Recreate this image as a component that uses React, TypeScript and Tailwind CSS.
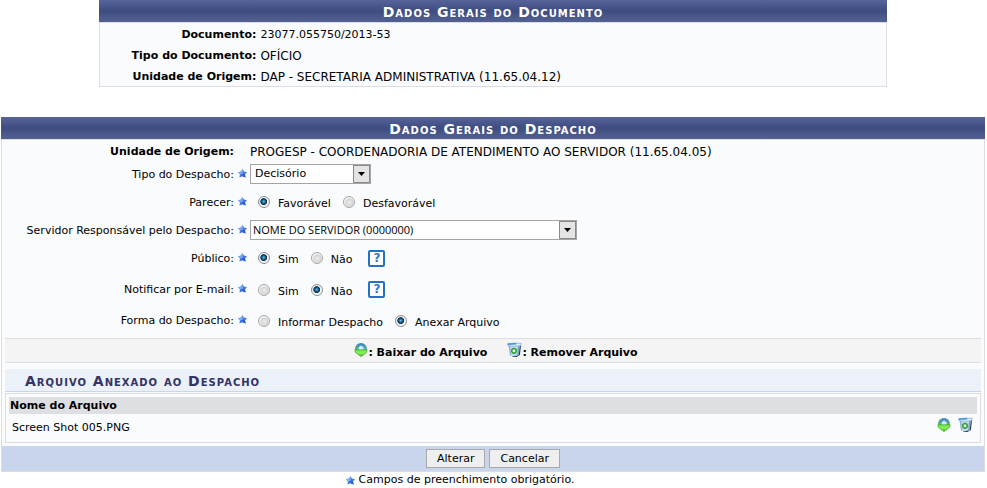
import { useState, type ReactNode } from "react";

const FILES = [{ id: 1, name: "Screen Shot 005.PNG" }];

function Star() {
  return (
    <svg viewBox="0 0 9 9" className="h-[9px] w-[9px] shrink-0" aria-hidden="true">
      <path d="M4.5 0 L5.8 2.6 L9 3.2 L7 5.4 L7.6 8.4 L4.5 7.2 L1.4 8.4 L2 5.4 L0 3.2 L3.2 2.6 Z" fill="#3f78e0" />
      <path d="M4.5 0 L4.8 4.4 L2 5.4 L0 3.2 L3.2 2.6 Z" fill="#7eaaf3" />
      <path d="M4.5 5 L7 5.4 L7.6 8.4 L4.5 7.2 Z" fill="#2a5bcb" />
    </svg>
  );
}

function DownloadIcon() {
  return (
    <svg viewBox="0 0 14 16" className="h-4 w-3.5 shrink-0" aria-hidden="true">
      <defs>
        <linearGradient id="globe" x1="0" y1="0" x2="0" y2="1">
          <stop offset="0" stopColor="#3a7fc4" />
          <stop offset="1" stopColor="#9fd4f2" />
        </linearGradient>
        <linearGradient id="arrow" x1="0" y1="0" x2="0" y2="1">
          <stop offset="0" stopColor="#5fdc3c" />
          <stop offset="0.5" stopColor="#8cf05a" />
          <stop offset="1" stopColor="#3fb01e" />
        </linearGradient>
      </defs>
      <circle cx="7" cy="7" r="6" fill="url(#globe)" />
      <path d="M1.4 6.5 Q2 3 4.6 1.8 Q5.6 4 3 6.5 Z M10 2.4 Q12 3.4 12.6 6 L11 6 Z" fill="#4aa86c" />
      <path d="M4.6 8 V5.4 L7 3.4 L9.6 5.4 V8 Z" fill="#d5edf9" />
      <path d="M0.9 7.4 L4.4 7.4 Q7 8.4 9.6 7.4 L13.1 7.4 L12.6 10.4 L7 14.6 L1.4 10.4 Z" fill="url(#arrow)" stroke="#3da82a" strokeWidth="0.7" />
    </svg>
  );
}

function TrashIcon() {
  return (
    <svg viewBox="0 0 15 16" className="h-4 w-[15px] shrink-0" aria-hidden="true">
      <path d="M11 4 L14 3 L12.9 13 L9.4 15 L5 14.6 Z" fill="#1f3550" />
      <path d="M1.6 3 H12.8 L11.8 13 Q7.4 15 3 13.2 Z" fill="#c3d8f1" />
      <path d="M1.6 3 L3 13.2 L4.2 13.6 L2.8 3.4 Z" fill="#8ea9d0" />
      <path d="M11 4.4 H12.6 L11.7 13 L10 14 Z" fill="#7f9cc6" />
      <path d="M0.6 1.8 Q7 0.6 14.2 1.4 L13.8 3.6 Q7 4.8 1 3.8 Z" fill="#e3f1ff" stroke="#6d97cc" strokeWidth="0.6" />
      <path d="M0.6 1.5 Q5 0.6 9.4 1.1 V2.4 L0.9 2.9 Z" fill="#4a92e2" />
      <circle cx="7" cy="8.8" r="3.1" fill="#e9f7ee" />
      <circle cx="7" cy="8.8" r="2.3" fill="none" stroke="#2da33a" strokeWidth="1.6" />
    </svg>
  );
}

function TitleBar({ children }: { children: ReactNode }) {
  return (
    <h2 className="h-[22px] bg-linear-to-b from-[#56649a] via-[#3f4c80] to-[#536292] text-center text-[14px] leading-[24px] font-bold tracking-[1px] text-white [font-variant:small-caps]">
      {children}
    </h2>
  );
}

function DocRow({ label, children }: { label: string; children: ReactNode }) {
  return (
    <div className="flex h-[21px] items-center gap-1 pt-0.5">
      <dt className="w-[156px] text-right font-bold whitespace-nowrap">{label}</dt>
      <dd>{children}</dd>
    </div>
  );
}

function Field({ label, htmlFor, children }: { label: string; htmlFor?: string; children: ReactNode }) {
  return (
    <div className="flex h-full items-center">
      <label htmlFor={htmlFor} className="w-[232px] shrink-0 pt-px text-right">{label}</label>
      <span className="w-4 shrink-0 pb-0.5 pl-1"><Star /></span>
      {children}
    </div>
  );
}

function Select({ id, className, options }: { id: string; className: string; options: string[] }) {
  return (
    <div className="relative">
      <select id={id} className={`h-5 appearance-none rounded-none border border-[#a5a5a5] bg-white pr-5 ${className}`}>
        {options.map((o) => <option key={o}>{o}</option>)}
      </select>
      <span className="pointer-events-none absolute top-px right-px flex h-[18px] w-[17px] items-center justify-center border border-[#8a8a8a] bg-[#e4e4e4]">
        <svg viewBox="0 0 7 4" className="h-1 w-[7px]" aria-hidden="true"><path d="M0 0 H7 L3.5 4 Z" fill="#000" /></svg>
      </span>
    </div>
  );
}

function RadioGroup({ name, options, initial }: { name: string; options: string[]; initial: string }) {
  const [value, setValue] = useState(initial);
  return (
    <div role="radiogroup" aria-label={name} className="flex gap-3 pl-2">
      {options.map((o) => (
        <label key={o} className="flex items-center gap-2">
          <input
            type="radio"
            name={name}
            checked={value === o}
            onChange={() => setValue(o)}
            className="h-3 w-3 appearance-none rounded-full border border-[#a4a5a5] bg-[radial-gradient(circle_at_55%_55%,#ececec_0,#dcdcdc_35%,#d0d0d0_45%,#f4f4f4_58%)] checked:border-[#8e8f8f] checked:bg-[radial-gradient(circle_at_47%_46%,#6cc8ee_0,#1c6d9c_20%,#0d2f4c_40%,#f4f4f4_50%)]"
          />
          <span className="pt-1">{o}</span>
        </label>
      ))}
    </div>
  );
}

function Help({ label }: { label: string }) {
  return (
    <button type="button" aria-label={label} className="ml-4 h-[17px] w-[17px] rounded-[2px] border-2 border-[#2272c6] bg-white text-[12px] leading-[13px] font-bold text-[#2a7ad0]">
      ?
    </button>
  );
}

export default function App() {
  return (
    <main className="mr-0.5 ml-px font-['Verdana','DejaVu_Sans',sans-serif] text-[11px] leading-[14px] text-black">
      <section className="mx-auto w-4/5">
        <TitleBar>Dados Gerais do Documento</TitleBar>
        <dl className="border border-[#dcdde2] bg-[#fafbfd]">
          <DocRow label="Documento:">23077.055750/2013-53</DocRow>
          <DocRow label="Tipo do Documento:"><span className="text-xs">OFÍCIO</span></DocRow>
          <DocRow label="Unidade de Origem:"><span className="text-xs">DAP - SECRETARIA ADMINISTRATIVA (11.65.04.12)</span></DocRow>
        </dl>
      </section>

      <form className="mt-[30px]" onSubmit={(e) => e.preventDefault()}>
        <TitleBar>Dados Gerais do Despacho</TitleBar>
        <div className="border border-[#dcdde2] bg-[#fafbfd]">
          <div className="flex h-[22px] items-center gap-4 pt-0.5">
            <span className="w-[232px] shrink-0 text-right font-bold">Unidade de Origem:</span>
            <span className="text-xs">PROGESP - COORDENADORIA DE ATENDIMENTO AO SERVIDOR (11.65.04.05)</span>
          </div>
          <div className="h-6">
            <Field label="Tipo do Despacho:" htmlFor="tipo">
              <Select id="tipo" className="w-[121px] pl-1" options={["Decisório"]} />
            </Field>
          </div>
          <div className="h-8">
            <Field label="Parecer:">
              <RadioGroup name="parecer" options={["Favorável", "Desfavorável"]} initial="Favorável" />
            </Field>
          </div>
          <div className="h-6">
            <Field label="Servidor Responsável pelo Despacho:" htmlFor="servidor">
              <Select id="servidor" className="w-[327px] pl-0.5 font-['Open_Sans',sans-serif]" options={["NOME DO SERVIDOR (0000000)"]} />
            </Field>
          </div>
          <div className="h-8">
            <Field label="Público:">
              <RadioGroup name="publico" options={["Sim", "Não"]} initial="Sim" />
              <Help label="Ajuda: Público" />
            </Field>
          </div>
          <div className="h-[31px]">
            <Field label="Notificar por E-mail:">
              <RadioGroup name="notificar" options={["Sim", "Não"]} initial="Não" />
              <Help label="Ajuda: Notificar por E-mail" />
            </Field>
          </div>
          <div className="h-[31px]">
            <Field label="Forma do Despacho:">
              <RadioGroup name="forma" options={["Informar Despacho", "Anexar Arquivo"]} initial="Anexar Arquivo" />
            </Field>
          </div>

          <div className="mx-[3px] mt-0.5">
            <div className="flex h-[25px] items-center justify-center gap-5 border-y border-[#dcdde2] bg-[#f4f4f4] pl-1.5 font-bold">
              <span className="flex items-start"><DownloadIcon /><span className="pt-1">: Baixar do Arquivo</span></span>
              <span className="flex items-start"><TrashIcon /><span className="pt-1">: Remover Arquivo</span></span>
            </div>

            <h3 className="mt-1.5 h-[23px] border-b border-[#c8d5ec] bg-[#ecf1f9] pl-5 text-[14px] leading-[24px] font-bold tracking-[1px] text-[#333366] [font-variant:small-caps]">
              Arquivo Anexado ao Despacho
            </h3>
            <div className="mt-px border border-[#dcdde2] px-[3px] pt-[3px] pb-0.5">
              <table className="w-full">
                <thead>
                  <tr className="h-[17px] bg-[#dedfe3]">
                    <th colSpan={2} className="pt-px pl-px text-left font-bold">Nome do Arquivo</th>
                  </tr>
                </thead>
                <tbody>
                  {FILES.map((f) => (
                    <tr key={f.id} className="h-[26px]">
                      <td className="pt-px pl-[3px]">{f.name}</td>
                      <td className="pr-1">
                        <div className="flex justify-end gap-[7px] pb-1">
                          <button type="button" aria-label="Baixar do Arquivo"><DownloadIcon /></button>
                          <button type="button" aria-label="Remover Arquivo"><TrashIcon /></button>
                        </div>
                      </td>
                    </tr>
                  ))}
                </tbody>
              </table>
            </div>
          </div>

          <div className="mt-[3px] flex h-[25px] items-center justify-center gap-1 bg-[#c8d5ec]">
            <button type="submit" className="h-[19px] border border-[#a9a9a9] bg-[#efefef] px-2.5">Alterar</button>
            <button type="button" className="h-[19px] border border-[#a9a9a9] bg-[#efefef] px-2.5">Cancelar</button>
          </div>
        </div>
      </form>

      <p className="flex items-center justify-center gap-1 pt-px pr-[66px]">
        <Star />
        Campos de preenchimento obrigatório.
      </p>
    </main>
  );
}
